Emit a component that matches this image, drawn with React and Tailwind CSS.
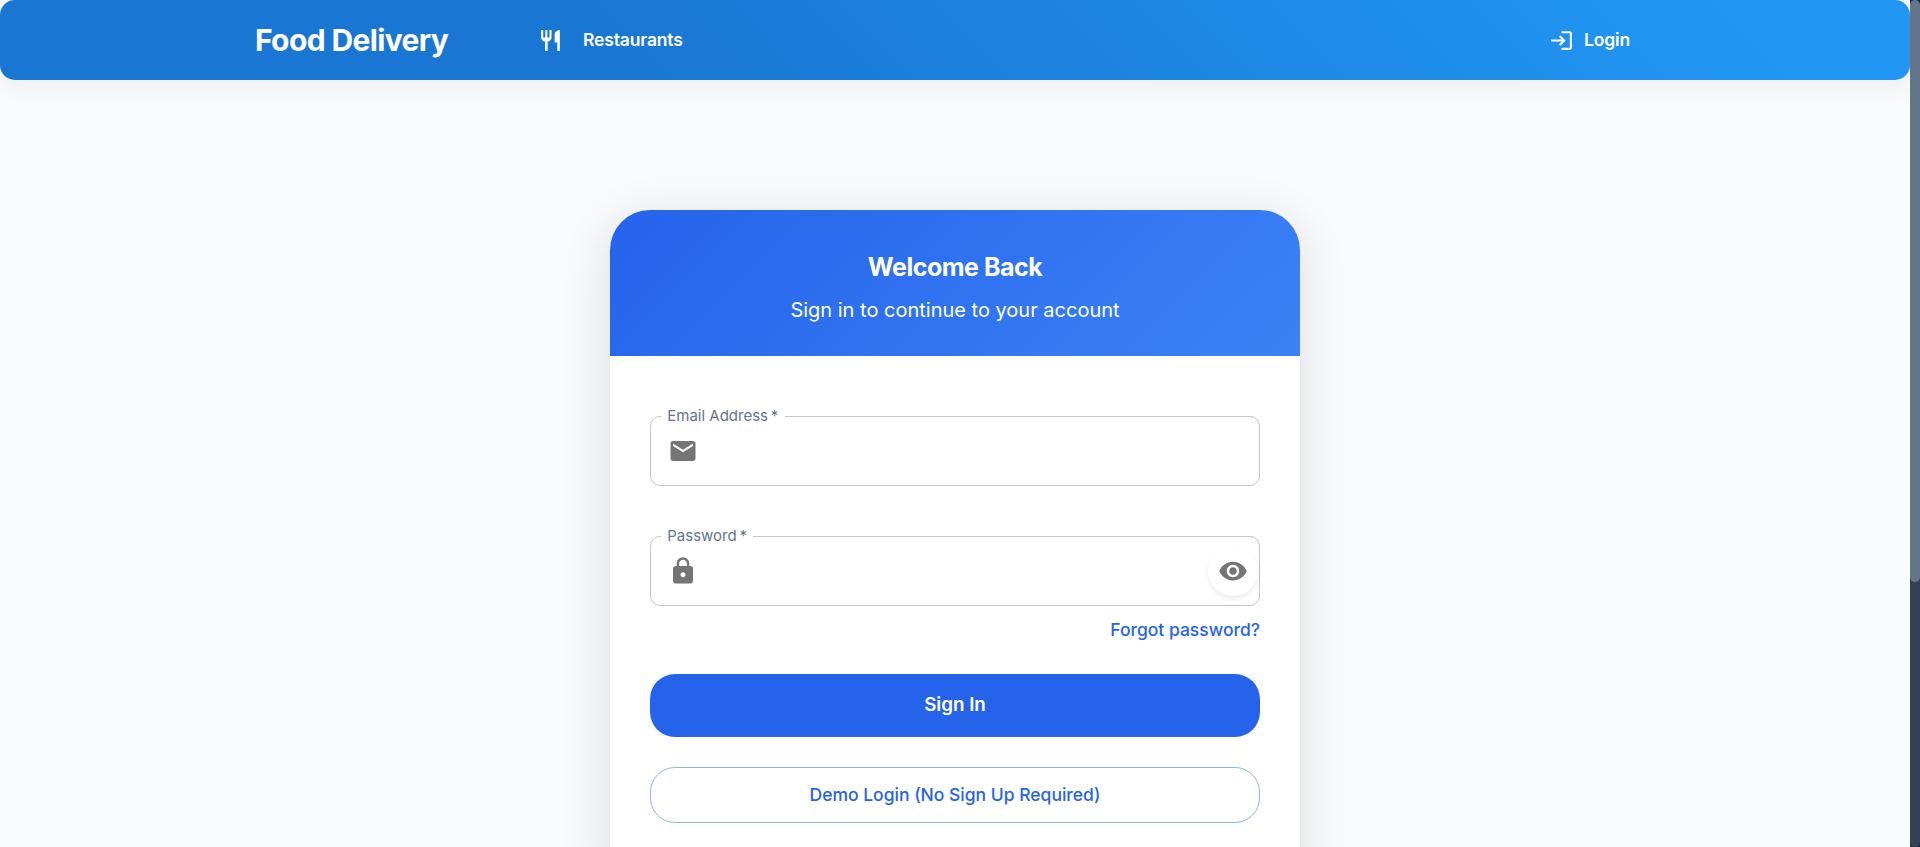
const RESTAURANT =
  'M11 9H9V2H7v7H5V2H3v7c0 2.12 1.66 3.84 3.75 3.97V22h2.5v-9.03C11.34 12.84 13 11.12 13 9V2h-2zm5-3v8h2.5v8H21V2c-2.76 0-5 2.24-5 4';
const LOGIN =
  'M11 7 9.6 8.4l2.6 2.6H2v2h10.2l-2.6 2.6L11 17l5-5zm9 12h-8v2h8c1.1 0 2-.9 2-2V5c0-1.1-.9-2-2-2h-8v2h8z';
const EMAIL =
  'M20 4H4c-1.1 0-1.99.9-1.99 2L2 18c0 1.1.9 2 2 2h16c1.1 0 2-.9 2-2V6c0-1.1-.9-2-2-2m0 4-8 5-8-5V6l8 5 8-5z';
const LOCK =
  'M18 8h-1V6c0-2.76-2.24-5-5-5S7 3.24 7 6v2H6c-1.1 0-2 .9-2 2v10c0 1.1.9 2 2 2h12c1.1 0 2-.9 2-2V10c0-1.1-.9-2-2-2m-6 9c-1.1 0-2-.9-2-2s.9-2 2-2 2 .9 2 2-.9 2-2 2m3.1-9H8.9V6c0-1.71 1.39-3.1 3.1-3.1s3.1 1.39 3.1 3.1z';
const EYE =
  'M12 4.5C7 4.5 2.73 7.61 1 12c1.73 4.39 6 7.5 11 7.5s9.27-3.11 11-7.5c-1.73-4.39-6-7.5-11-7.5M12 17c-2.76 0-5-2.24-5-5s2.24-5 5-5 5 2.24 5 5-2.24 5-5 5m0-8c-1.66 0-3 1.34-3 3s1.34 3 3 3 3-1.34 3-3-1.34-3-3-3';

function Icon({ path, className }) {
  return (
    <svg viewBox="0 0 24 24" fill="currentColor" className={className} aria-hidden="true">
      <path d={path} />
    </svg>
  );
}

function Navbar() {
  return (
    <header className="flex h-20 items-center rounded-[15px] bg-[linear-gradient(45deg,#1976d2_30%,#2196f3_90%)] pr-[280px] pl-[255px] text-white shadow-[0_5px_25px_rgba(0,0,0,0.06)]">
      <h1 className="w-[283px] text-[30px] leading-10 font-bold tracking-[-0.625px]">Food Delivery</h1>
      <a className="flex items-center">
        <Icon path={RESTAURANT} className="size-[25px]" />
        <span className="ml-[20px] text-[17.5px] leading-[30px] font-semibold tracking-[-0.15px]">Restaurants</span>
      </a>
      <a className="ml-auto flex items-center">
        <Icon path={LOGIN} className="size-[25px]" />
        <span className="ml-[10px] text-[17.5px] leading-[30px] font-semibold tracking-[-0.15px]">Login</span>
      </a>
    </header>
  );
}

function Field({ label, icon, type, children }) {
  return (
    <div className="relative flex h-[70px] items-center rounded-[10px] border border-[#c4c4c4] pr-px pl-[17px]">
      <label className="absolute -top-[11px] left-[10px] bg-white px-[6.25px] text-[15px] leading-[20px] whitespace-nowrap text-[#64748b]">
        {label}
        <span>{'\u2009'}*</span>
      </label>
      <Icon path={icon} className="size-[30px] shrink-0 text-[#757575]" />
      <input type={type} className="h-full min-w-0 flex-1 px-2 outline-none" />
      {children}
    </div>
  );
}

function LoginCard() {
  return (
    <section className="mx-auto mt-[130px] w-[690px] overflow-hidden rounded-[40px] bg-white shadow-[0_10px_50px_rgba(0,0,0,0.12)]">
      <div className="flex h-[146px] flex-col items-center bg-[linear-gradient(135deg,#2563eb,#3b82f6)] pt-[40px] text-white">
        <h2 className="text-[25px] leading-[34px] font-bold tracking-[-0.5px]">Welcome Back</h2>
        <p className="mt-[11px] text-[20px] leading-[30px]">Sign in to continue to your account</p>
      </div>
      <form className="flex flex-col px-10 pt-[60px] pb-20">
        <Field label="Email Address" icon={EMAIL} type="email" />
        <div className="h-[50px]" />
        <Field label="Password" icon={LOCK} type="password">
          <button
            type="button"
            aria-label="Toggle password visibility"
            className="flex size-[50px] items-center justify-center rounded-full text-[#757575] shadow-[0_2.5px_5px_rgba(0,0,0,0.08)]"
          >
            <Icon path={EYE} className="size-[30px]" />
          </button>
        </Field>
        <a className="mt-[11px] self-end text-[17.5px] leading-[26px] font-medium text-[#2563eb]">Forgot password?</a>
        <button type="button" className="mt-[31px] h-[63px] rounded-[25px] bg-[#2563eb] text-[18.75px] font-semibold text-white">
          Sign In
        </button>
        <button
          type="button"
          className="mt-[30px] h-[56px] rounded-[25px] border border-[#2563eb]/50 text-[17.5px] font-medium text-[#2563eb]"
        >
          Demo Login (No Sign Up Required)
        </button>
      </form>
    </section>
  );
}

export default function App() {
  return (
    <div className="flex h-[847px] w-full overflow-hidden bg-[#f8fafc] font-['Inter',sans-serif]">
      <main className="h-full min-w-0 flex-1 overflow-hidden">
        <Navbar />
        <LoginCard />
      </main>
      <div className="h-full w-[10px] bg-[#1e293b]">
        <div className="h-full rounded-[5px] bg-[#334155]">
          <div className="h-[582px] rounded-[5px] bg-[#64748b]" />
        </div>
      </div>
    </div>
  );
}
